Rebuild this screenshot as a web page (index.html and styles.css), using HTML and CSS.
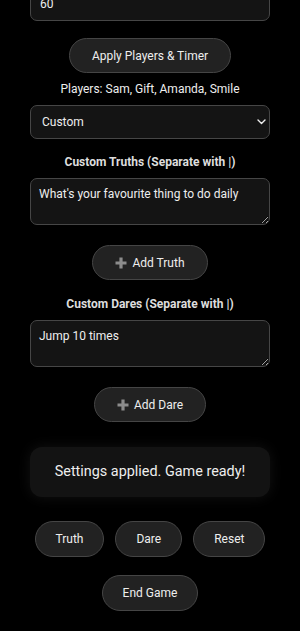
FILE: index.html
```html
<!DOCTYPE html>
<html lang="en">
<head>
  <meta charset="UTF-8">
  <meta name="viewport" content="width=device-width, initial-scale=1.0">
  <title>Truth or Dare</title>
  <link rel="stylesheet" href="styles.css">
</head>
<body>
  <div class="game">
    <input type="number" class="field timer-input" value="60">
    <button class="pill apply-btn">Apply Players &amp; Timer</button>
    <p class="players">Players: Sam, Gift, Amanda, Smile</p>

    <div class="select-wrap">
      <select class="field mode-select">
        <option>Custom</option>
      </select>
      <svg class="chevron" width="9" height="6" viewBox="0 0 9 6"><path d="M1 1l3.5 3.5L8 1" fill="none" stroke="#eee" stroke-width="1.4" stroke-linecap="round" stroke-linejoin="round"/></svg>
    </div>

    <label class="label">Custom Truths (Separate with |)</label>
    <textarea class="field custom-area">What's your favourite thing to do daily</textarea>
    <button class="pill add-btn"><svg class="plus" width="12" height="12" viewBox="0 0 12 12"><path d="M6 0.5v11M0.5 6h11" stroke="#8c8c8c" stroke-width="3.2"/></svg>Add Truth</button>

    <label class="label">Custom Dares (Separate with |)</label>
    <textarea class="field custom-area">Jump 10 times</textarea>
    <button class="pill add-btn"><svg class="plus" width="12" height="12" viewBox="0 0 12 12"><path d="M6 0.5v11M0.5 6h11" stroke="#8c8c8c" stroke-width="3.2"/></svg>Add Dare</button>

    <div class="status">Settings applied. Game ready!</div>

    <div class="actions">
      <button class="pill">Truth</button>
      <button class="pill">Dare</button>
      <button class="pill">Reset</button>
      <button class="pill">End Game</button>
    </div>
  </div>
</body>
</html>
```

FILE: styles.css
```css
* {
  box-sizing: border-box;
}
body {
  margin: 0;
  background: #000;
  color: #eee;
  font-family: Roboto, "Noto Sans", sans-serif;
}
.game {
  width: 240px;
  margin: 0 auto;
  display: flex;
  flex-direction: column;
  align-items: center;
}
.field {
  width: 100%;
  background-color: #141414;
  color: #eee;
  border: 1px solid #464646;
  border-radius: 7px;
  font-family: inherit;
  font-size: 12px;
  outline: none;
}
.timer-input {
  height: 34px;
  margin-top: -13px;
  padding: 0 9px;
  -moz-appearance: textfield;
}
.timer-input::-webkit-inner-spin-button,
.timer-input::-webkit-outer-spin-button {
  -webkit-appearance: none;
  margin: 0;
}
.pill {
  background-color: #222;
  color: #eee;
  border: 1px solid #454545;
  border-radius: 18px;
  height: 35px;
  padding: 0 22px;
  font-family: inherit;
  font-size: 12px;
  cursor: pointer;
}
.apply-btn {
  margin-top: 17px;
}
.players {
  margin: 8px 0 0;
  font-size: 12px;
  line-height: 16px;
}
.select-wrap {
  position: relative;
  width: 100%;
  margin-top: 8px;
}
.mode-select {
  display: block;
  height: 34px;
  padding: 0 11px;
  appearance: none;
  -webkit-appearance: none;
}
.chevron {
  position: absolute;
  right: 4px;
  top: 14px;
}
.label {
  margin-top: 15px;
  font-size: 12px;
  line-height: 16px;
  font-weight: bold;
  color: #ddd;
}
.add-btn + .label {
  margin-top: 16px;
}
.custom-area {
  display: block;
  height: 47px;
  margin-top: 8px;
  padding: 8px 8px;
  line-height: 15px;
  resize: vertical;
}
.add-btn {
  margin-top: 20px;
  display: flex;
  align-items: center;
  gap: 5px;
  padding: 0 22px;
}
.status {
  width: 100%;
  margin-top: 25px;
  padding: 16px 10px;
  background-color: #131313;
  border-radius: 12px;
  box-shadow: 0 0 14px rgba(255, 255, 255, 0.07);
  text-align: center;
  font-size: 14.4px;
  line-height: 18px;
}
.actions {
  display: flex;
  flex-wrap: wrap;
  justify-content: center;
  gap: 18px 11px;
  margin-top: 24px;
}
.actions .pill {
  height: 36px;
  padding: 0 20px;
}
```
